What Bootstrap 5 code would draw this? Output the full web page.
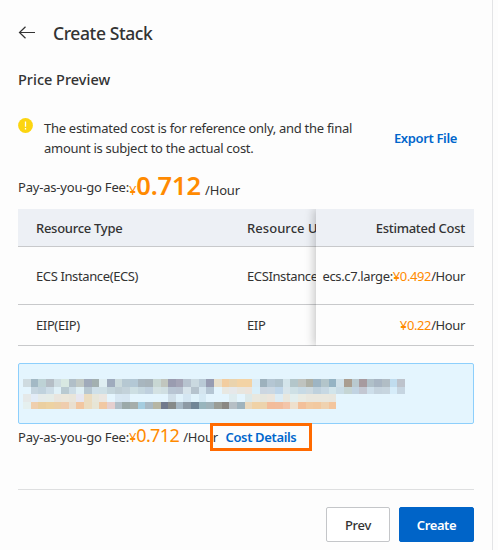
<!DOCTYPE html>
<html lang="en">
<head>
<meta charset="utf-8">
<meta name="viewport" content="width=device-width, initial-scale=1">
<title>Create Stack</title>
<link href="https://cdn.jsdelivr.net/npm/bootstrap@5.3.0/dist/css/bootstrap.min.css" rel="stylesheet">
<style>
body{background:#fdfdfd;color:#333;font:13px/20px "Noto Sans","Open Sans",sans-serif;letter-spacing:-.2px;overflow:hidden}
.page{width:493px;height:550px;padding:0 18px;border-right:1px solid #e3e4e6}
.semi{font-weight:600;letter-spacing:-.35px}
.title-bar{height:66px;gap:18px}
.title-bar h1{font-size:17.5px;line-height:24px;font-weight:500;letter-spacing:-.4px}
.section-title{font-size:14.5px;line-height:20px;letter-spacing:0;margin-top:3px;font-weight:500}
.notice{margin-top:29px;height:42px}
.notice svg{margin-right:11px}
.notice p{width:320px;letter-spacing:-.28px}
.blue-link{color:#06c;text-decoration:none}
.export{margin-right:17px;padding-bottom:2px}
.orange{color:#ff8a00}
.fee{margin-top:9px;height:40px}
.fee .t-fee{align-self:flex-start;margin-top:8px}
.fee-big{font-size:25.5px;line-height:32px;font-weight:600;letter-spacing:-.1px}
.fee-mid{font-size:18px;line-height:22px;letter-spacing:-.6px}
.cells{height:38px;border-bottom:1px solid #c8c9cb}
.cells.tall{height:58px}
.cells.mid{height:41px}
.cells.tall,.cells.mid{letter-spacing:-.38px}
.cells.head{background:#edf0f5;font-weight:500;letter-spacing:-.28px}
.cells.head .usage{letter-spacing:.05px}
.scroll-part{width:298px;overflow:hidden;white-space:nowrap;padding-left:18px}
.scroll-part .kind{width:211px;flex:none}
.pinned{width:158px;padding-right:9px;background:#fdfdfd}
.pinned-wrap{box-shadow:-2px 0 9px rgba(0,0,0,.22);clip-path:inset(0 0 0 -12px)}
.info-box{margin-top:17px;height:61px;border:1px solid #8dcffc;border-radius:2px;background:#e4f5fe;padding:15px 4px}
.blocks{display:grid;grid-template-columns:repeat(50,1fr);width:382px;height:30px}
.total{height:30px;margin-top:-1px}
.outlined{border:3px solid #ff6a00;width:102px;height:28px;margin-left:-8px}
.foot{margin-top:36px;border-top:1px solid #dedfe0;padding-top:17px;gap:9px}
.foot .btn{--bs-btn-font-size:13px;--bs-btn-border-radius:2px;--bs-btn-padding-y:0;--bs-btn-padding-x:0;height:35px;font-weight:500;letter-spacing:-.25px;padding-top:2px}
.prev{width:64px;--bs-btn-border-color:#c4c6c9;--bs-btn-color:#333;--bs-btn-bg:#fff}
.foot .create{width:75px;font-weight:600;letter-spacing:-.4px;--bs-btn-bg:#0064c8;--bs-btn-border-color:#0064c8}
</style>
</head>
<body>
<main class="page">
  <header class="title-bar d-flex align-items-center">
    <svg width="17" height="14" viewBox="0 0 17 14" fill="none" stroke="#333" stroke-width="1.2"><path d="M7.5 .8 1.5 6.5l6 5.7M1.7 6.5H17"/></svg>
    <h1 class="mb-0">Create Stack</h1>
  </header>
  <h2 class="section-title mb-0">Price Preview</h2>
  <section class="notice d-flex align-items-start">
    <svg width="15" height="15" viewBox="0 0 15 15"><circle cx="7.5" cy="7.5" r="7.4" fill="#fcd510"/><path d="M7.5 3.5v5.2M7.5 10v1.5" stroke="#fff" stroke-width="1.3"/></svg>
    <p class="mb-0">The estimated cost is for reference only, and the final<br>amount is subject to the actual cost.</p>
    <a class="blue-link semi export ms-auto align-self-center" href="#">Export File</a>
  </section>
  <div class="fee d-flex align-items-baseline"><span class="t-fee">Pay-as-you-go Fee:</span><span class="orange yen">¥</span><span class="orange fee-big">0.712</span><span class="ms-1">/Hour</span></div>
  <section class="d-flex">
    <div>
      <div class="scroll-part cells head d-flex align-items-center"><span class="kind">Resource Type</span><span class="usage">Resource Usage</span></div>
      <div class="scroll-part cells tall d-flex align-items-center"><span class="kind">ECS Instance(ECS)</span><span>ECSInstances</span></div>
      <div class="scroll-part cells mid d-flex align-items-center"><span class="kind">EIP(EIP)</span><span>EIP</span></div>
    </div>
    <div class="pinned-wrap">
      <div class="pinned cells head d-flex align-items-center justify-content-end">Estimated Cost</div>
      <div class="pinned cells tall d-flex align-items-center justify-content-end">ecs.c7.large:<span class="orange">¥0.492</span>/Hour</div>
      <div class="pinned cells mid d-flex align-items-center justify-content-end"><span class="orange">¥0.22</span>/Hour</div>
    </div>
  </section>
  <div class="info-box"><div class="blocks" id="blocks"></div></div>
  <div class="total d-flex align-items-baseline"><span class="t-fee">Pay-as-you-go Fee:</span><span class="orange yen">¥</span><span class="orange fee-mid">0.712</span><span class="ms-1">/Hour</span><a class="outlined blue-link semi d-flex align-items-center justify-content-center" href="#">Cost Details</a></div>
  <footer class="foot d-flex justify-content-end">
    <button class="btn prev" type="button">Prev</button>
    <button class="btn btn-primary create" type="button">Create</button>
  </footer>
</main>
<script src="https://cdn.jsdelivr.net/npm/bootstrap@5.3.0/dist/js/bootstrap.bundle.min.js"></script>
<script>
// Colour of each block in the redacted message, row by row; "-" leaves a block empty.
const rows = [
"cfdbe0 a3b9c5 bdd2d5 b5bec6 cddce1 d8e8e2 b1bfc8 c1c9c5 a0aaba a3b0b0 dfeef2 9fabbd cbdadc b6c8d2 b3c8d5 a8b6bf a8b4bb c8d7d3 c1c6be 9a9cb0 a4a4b6 b7c3cf cad9e0 b9cad6 979cb2 e9dfca f2cda0 ead3ad f3d3a5 f3d3a5 d9ebf5 9db1bd b4c6d3 afc2cc d3e4ea b3c6ca bfc3bf aeb0a6 9eb5c4 b3c5ca 95b3c3 cfe0e8 aa9e90 b9c9cf a79a9f b0c0c9 a8b5c3 b1bdc5 c0dcee bdc3cc",
"- c6d6e0 c0d2dd cddde7 e0f1f8 b9cad1 cddde6 e0f0f5 b8c8d1 cfe0e9 cfe0e6 c4d5dc bfced5 c3d2da cddfe3 c5d7df bfd0de d4e2e3 d0dfe2 b8c5d3 b8c3d1 d7e4eb b5c3cd d4e5ef b5c6d4 - e8e8e2 e6e8ea e8e6df ece4dc d9effa ccd6e1 cbd8e3 bfd6ea d8e5eb cee0e5 c7dae5 cddae1 bfd1dd c7d8e3 d2e5eb c9dce6 c5d5d4 c1d3e2 c3c7d2 cddeea c5d3de c7d5df d6ecf9 c6d5e1",
"e5e9e9 e2ecf7 e5ebea e5ece8 e9e5de ebe7db e9e5da e6e6f0 ebdcc0 e7e6da ebe6e1 - d7e7f3 d6e6f2 - - - - - d0dfe9 e0f2fb d4e6f2 e0f3fb d5e9f4 - - - deecef - dce9ea e9e8df e6e6dd ebe5dc dcecf5 e8e7de e2eeee e9ebe3 e9e7de e9e7de e9e7de e8e6de - - - - - - - - -",
"e5f0ef efcfae ebcfa0 edd2a2 ecd0a8 efcdae e9dfd0 f2c6a0 ebdcc0 e7e5d5 f1c8a3 e5cfcf b1bfc8 9ba9a9 a6aeab a5cde0 a9b9c4 b6b6a4 717a8d 868a89 a6b8c5 8d9aa5 718696 98b5bd 9fb2b9 9a9d96 8a8883 b6bfc5 9fb3bd ebd9bd f0d2a6 ecd3ad f3bc9b f2bd9d f3c5aa eee0cd f3c09a f2cba3 f2c9a0 efd2b0 f3c59d - - - - - - - - -"];
const holder = document.getElementById("blocks");
rows.join(" ").split(" ").forEach(c => {
  const cell = document.createElement("span");
  if (c !== "-") cell.style.backgroundColor = "#" + c;
  holder.appendChild(cell);
});
</script>
</body>
</html>
